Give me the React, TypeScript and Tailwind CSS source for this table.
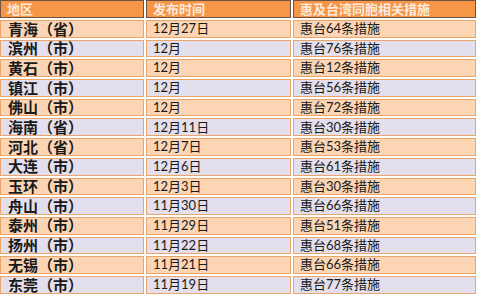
import React from "react";

const rows: [string, string, string][] = [
  ["青海（省）", "12月27日", "惠台64条措施"],
  ["滨州（市）", "12月", "惠台76条措施"],
  ["黄石（市）", "12月", "惠台12条措施"],
  ["镇江（市）", "12月", "惠台56条措施"],
  ["佛山（市）", "12月", "惠台72条措施"],
  ["海南（省）", "12月11日", "惠台30条措施"],
  ["河北（省）", "12月7日", "惠台53条措施"],
  ["大连（市）", "12月6日", "惠台61条措施"],
  ["玉环（市）", "12月3日", "惠台30条措施"],
  ["舟山（市）", "11月30日", "惠台66条措施"],
  ["泰州（市）", "11月29日", "惠台51条措施"],
  ["扬州（市）", "11月22日", "惠台68条措施"],
  ["无锡（市）", "11月21日", "惠台66条措施"],
  ["东莞（市）", "11月19日", "惠台77条措施"],
];

const font = { fontFamily: 'Lato, "Noto Sans CJK SC", sans-serif' };

export default function App() {
  return (
    <div className="w-[480px] h-[300px] overflow-hidden bg-white" style={font}>
      <div className="flex flex-col gap-[2px] w-[476px]">
        <div className="flex gap-[2px] h-[18px]">
          {["地区", "发布时间", "惠及台湾同胞相关措施"].map((h, i) => (
            <div
              key={i}
              className={`${i === 0 ? "w-[144px]" : i === 1 ? "w-[145px]" : "w-[183px]"} bg-[#f79646] border border-[#6e5446] text-[#fdeadf] text-[13px] font-bold leading-[16px] pl-[6px] flex items-center`}
            >
              {h}
            </div>
          ))}
        </div>
        {rows.map((r, idx) => {
          const bg = idx % 2 === 0 ? "bg-[#fcd5b4]" : "bg-[#e4dfec]";
          return (
            <div key={idx} className="flex gap-[2px] h-[17.7px]">
              <div className={`w-[144px] ${bg} border border-[#e9a56a] pl-[7px] flex items-center text-[15px] font-bold text-[#1a1a1a]`}>
                {r[0]}
              </div>
              <div className={`w-[145px] ${bg} border border-[#e9a56a] pl-[6px] flex items-center text-[13px] text-[#1a1a1a]`}>
                {r[1]}
              </div>
              <div className={`w-[183px] ${bg} border border-[#e9a56a] pl-[6px] flex items-center text-[13px] text-[#1a1a1a]`}>
                {r[2]}
              </div>
            </div>
          );
        })}
      </div>
    </div>
  );
}
